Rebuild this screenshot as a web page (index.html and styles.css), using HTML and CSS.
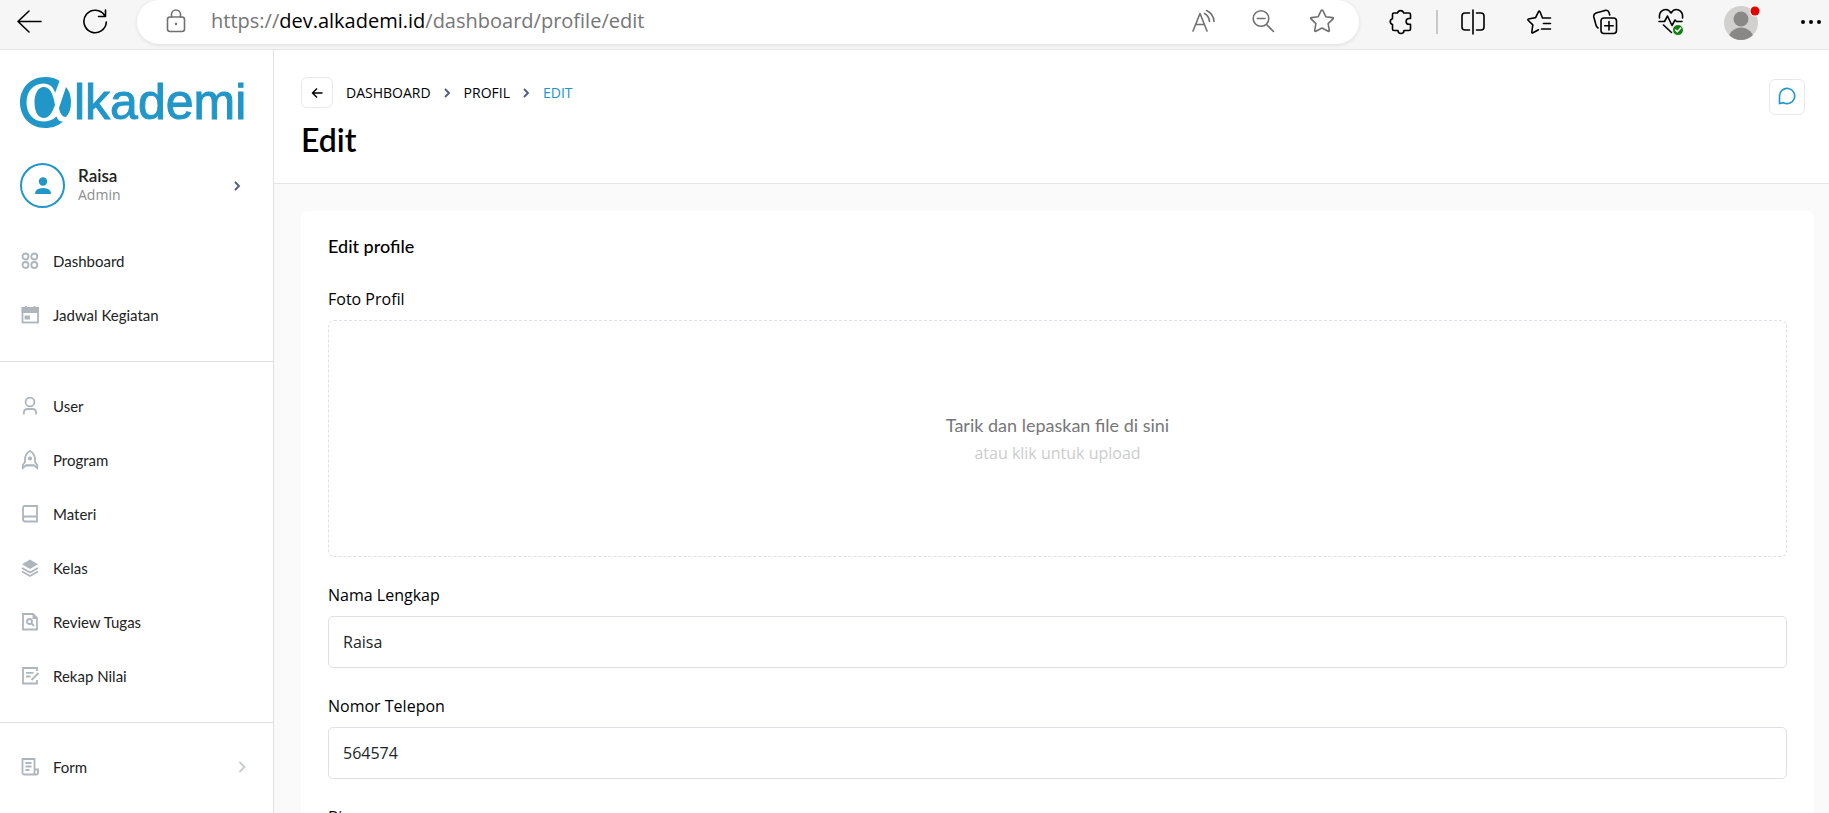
FILE: index.html
```html
<!DOCTYPE html>
<html lang="id">
<head>
<meta charset="utf-8">
<title>Edit Profil - Alkademi</title>
<link rel="stylesheet" href="styles.css">
</head>
<body>
<header class="browser">
  <div class="browser-nav">
    <button class="tool" aria-label="Back"><svg width="26" height="26" viewBox="0 0 26 26"><path d="M25 12.500H2M13 2 2 12.500 13 23"/></svg></button>
    <button class="tool" aria-label="Reload"><svg width="26" height="26" viewBox="0 0 26 26"><path d="M22.600 6.500A11.200 11.200 0 1 0 24.300 13M23.500 1v6.500H16.500"/></svg></button>
  </div>
  <div class="address">
    <svg class="grey" width="20" height="24" viewBox="0 0 20 24"><rect x="1.500" y="8" width="17" height="14.500" rx="2.500"/><path d="M5.500 8V5.500a4.500 4.500 0 0 1 9 0V8"/><circle cx="10" cy="15" r="1.200" class="solid"/></svg>
    <p class="url">https://<span class="host">dev.alkademi.id</span>/dashboard/profile/edit</p>
    <div class="address-tools">
      <button class="tool grey" aria-label="Read aloud"><svg width="26" height="24" viewBox="0 0 26 24"><path d="M2 22 9 4.500 16 22M4.800 15.500h8.500M13.500 4.500q4.500 2.500 5 8M15.500 1.500q7 3 7.500 11"/></svg></button>
      <button class="tool grey" aria-label="Zoom"><svg width="24" height="24" viewBox="0 0 24 24"><circle cx="10" cy="9.500" r="7.800"/><path d="M6.500 9.500h7.500M15.500 15.500 22.500 22.500"/></svg></button>
      <button class="tool grey" aria-label="Add to favorites"><svg width="26" height="26" viewBox="0 0 26 26"><path d="M13 2q.6 0 .9.700l2.900 6 6.700.9q1.300.3.500 1.300l-4.900 4.700 1.200 6.700q.1 1.400-1.100.9L13 20l-6.100 3.200q-1.300.5-1.200-.9l1.200-6.700L2 10.900q-.8-1 .5-1.300l6.700-.9 2.900-6q.3-.7.900-.7z"/></svg></button>
    </div>
  </div>
  <div class="browser-tools">
    <button class="tool" aria-label="Extensions"><svg width="26" height="26" viewBox="0 0 26 26"><path d="M9.500 4a3.200 3.200 0 0 1 6.200 0H21a1.500 1.500 0 0 1 1.500 1.500V9.500h-1.500a2.800 2.800 0 0 0 0 5.800h1.500V20a1.500 1.500 0 0 1-1.500 1.500h-5a3 3 0 0 1-6 0H6A1.500 1.500 0 0 1 4.500 20v-4.500a3 3 0 0 1 0-5.800V5.500A1.500 1.500 0 0 1 6 4z"/></svg></button>
    <span class="tool-rule"></span>
    <button class="tool" aria-label="Split screen"><svg width="26" height="26" viewBox="0 0 26 26"><path d="M13 1v24M9.500 4H5a3 3 0 0 0-3 3v11a3 3 0 0 0 3 3h4.500M16.500 4H21a3 3 0 0 1 3 3v11a3 3 0 0 1-3 3h-4.500"/></svg></button>
    <button class="tool" aria-label="Favorites"><svg width="26" height="26" viewBox="0 0 26 26"><path d="M24.500 9h-8L14 2.800q-.8-1.300-1.600 0L9.600 8.600 2.500 10q-1 .4-.4 1.300l4.700 4.600L5.800 23q0 1.300 1.200.8l5.500-3M17.500 14.500h7M15.500 20h9"/></svg></button>
    <button class="tool" aria-label="Collections"><svg width="26" height="26" viewBox="0 0 26 26"><rect x="9" y="9" width="15.500" height="15.500" rx="3"/><path d="M17 12.500v8.500M12.700 16.800h8.500M6 19Q4.500 18 4 16L1.800 8Q1.200 5 4 4l9-2.600q3.200-.7 4 2L17.700 6"/></svg></button>
    <button class="tool" aria-label="Browser essentials"><svg width="26" height="28" viewBox="0 0 26 28"><path d="M1.500 10C.5 2 9-1.500 13 5c4-6.500 12.500-3 11.500 5M1 13.500h5.500L9.500 8l4.500 9.500 3-5.500 1.500 1.500H24M5.500 17l8 7.500"/><circle cx="20" cy="22" r="5.500" class="check-disc"/><path d="m17.500 22 1.800 1.800L22.800 20" class="check-mark"/></svg></button>
    <button class="tool" aria-label="Profile"><svg width="36" height="36" viewBox="0 0 36 36"><defs><clipPath id="face"><circle cx="17" cy="19" r="17"/></clipPath></defs><g clip-path="url(#face)" stroke="none"><rect width="36" height="38" fill="#d2d0ce"/><circle cx="17" cy="15" r="7.500" fill="#8a8886"/><circle cx="17" cy="36.500" r="13" fill="#8a8886"/></g><circle cx="31" cy="7" r="5.500" fill="#f6f6f6" stroke="none"/><circle cx="31" cy="7" r="4.500" fill="#e60000" stroke="none"/></svg></button>
    <button class="tool" aria-label="More"><svg width="22" height="6" viewBox="0 0 22 6"><g fill="#000" stroke="none"><circle cx="3" cy="3" r="2"/><circle cx="11" cy="3" r="2"/><circle cx="19" cy="3" r="2"/></g></svg></button>
  </div>
</header>

<div class="app">
  <aside class="sidebar">
    <a class="logo" href="#"><svg width="52" height="51" viewBox="0 0 52 51"><path fill="#2196c8" d="M39.500 4C36 1.500 31 0 25 0 10.500 0 0 11 0 25.500S10.500 51 25 51c7 0 13-2 18-6.500-3 .5-5-1-6.500-5-3.500 3.500-8 5-13.500 5C13 44.500 6.500 36 6.500 25.500S13 6.500 23.500 6.500c6 0 10 3.500 11.500 9.500z"/><path fill="#2196c8" d="M24 10c-6 0-9.500 6.500-9.500 15.500S18 41 24 41c5 0 8-5 11-13l-1-5C32 15 29 10 24 10zM46 10c3.500 4 5 9 5 15.500 0 6-1.500 11-5 14.500-3.500 0-6-3-7-9z"/></svg><span>lkademi</span></a>
    <a class="account" href="#">
      <span class="avatar"><svg width="16" height="18" viewBox="0 0 16 18"><circle cx="8" cy="4.500" r="4.200"/><path d="M0 17q0-6 8-6t8 6z"/></svg></span>
      <span class="who"><strong>Raisa</strong><small>Admin</small></span>
      <svg class="chevron" width="7" height="10" viewBox="0 0 7 10"><path d="m1 1 4 4-4 4"/></svg>
    </a>
    <nav>
      <ul class="menu">
        <li><a href="#"><svg viewBox="0 0 20 20"><circle cx="5.500" cy="5.500" r="3"/><circle cx="14.300" cy="5.500" r="3"/><circle cx="5.500" cy="14" r="3"/><circle cx="14.300" cy="14" r="3"/></svg>Dashboard</a></li>
        <li><a href="#"><svg viewBox="0 0 20 20"><rect x="2.500" y="3.500" width="15.500" height="14"/><path d="M2.500 3h15.500v4H2.500z" class="fill"/><path d="M6 1v2M14.500 1v2"/><path d="M5.500 11.500h3.500v2H5.500z" class="fill"/></svg>Jadwal Kegiatan</a></li>
      </ul>
      <ul class="menu">
        <li><a href="#"><svg viewBox="0 0 20 20"><circle cx="10" cy="6" r="4.400"/><path d="M3.800 18.500V17q0-4 4-4h4.400q4 0 4 4v1.500"/></svg>User</a></li>
        <li><a href="#"><svg viewBox="0 0 20 20"><path d="M6 15.200h8M5 12V8q1-5 5-7 4 2 5 7v4l2.200 3v3l-3-2.500H5.800L2.800 18v-3z"/><circle cx="10" cy="8.500" r="1.200" class="fill"/></svg>Program</a></li>
        <li><a href="#"><svg viewBox="0 0 20 20"><path d="M3 15V4q0-2 2-2h12v15.500H5q-2 0-2-2.500t2-2.500h12"/></svg>Materi</a></li>
        <li><a href="#"><svg viewBox="0 0 20 20"><path d="m10 1.500 8 4.700-8 4.800-8-4.800z" class="fill flat"/><path d="m2 10 8 4.500 8-4.500M2 13.500l8 4.500 8-4.500"/></svg>Kelas</a></li>
        <li><a href="#"><svg viewBox="0 0 20 20"><path d="M13 2H3v15.500h14V6z"/><path d="M12.500 1.500 17.500 7h-5z" class="fill flat"/><circle cx="9.500" cy="9.500" r="2.500"/><path d="m11.500 11.500 2.500 2.500"/></svg>Review Tugas</a></li>
        <li><a href="#"><svg viewBox="0 0 20 20"><path d="M17 5V2H3v15.500h14V14M6 6.800h7.500M6 10.500h4.500M11.500 14l7-7"/></svg>Rekap Nilai</a></li>
      </ul>
      <ul class="menu">
        <li><a href="#"><svg viewBox="0 0 20 20"><path d="M14.500 12.500V2H2.500v14q0 1.500 1.500 1.500h12q2 0 2-1.500v-3.500h-3.500v3.500q0 1.500 1.500 1.500M5.500 6h6M5.500 9.500h6M5.500 13h4"/></svg>Form<svg class="more" viewBox="0 0 8 12"><path d="m1.500 1 5 5-5 5"/></svg></a></li>
      </ul>
    </nav>
  </aside>

  <main class="main">
    <div class="page-head">
      <div class="head-left">
        <nav class="crumbs" aria-label="Breadcrumb">
          <button class="back" aria-label="Kembali"><svg width="12" height="12" viewBox="0 0 12 12"><path d="M11.500 6H1.500M6 1.500 1.500 6 6 10.500"/></svg></button>
          <a href="#">DASHBOARD</a>
          <svg class="chevron" width="7" height="10" viewBox="0 0 7 10"><path d="m1 1 4 4-4 4"/></svg>
          <a href="#">PROFIL</a>
          <svg class="chevron" width="7" height="10" viewBox="0 0 7 10"><path d="m1 1 4 4-4 4"/></svg>
          <span class="current">EDIT</span>
        </nav>
        <h1>Edit</h1>
      </div>
      <button class="chat" aria-label="Pesan"><svg width="18" height="18" viewBox="0 0 18 18"><path d="M1.500 16.500V9a7.600 7.600 0 1 1 4 6.700z"/></svg></button>
    </div>
    <form class="card">
      <h2>Edit profile</h2>
      <div class="field">
        <label for="photo">Foto Profil</label>
        <button type="button" id="photo" class="drop"><span class="drop-title">Tarik dan lepaskan file di sini</span><span class="drop-hint">atau klik untuk upload</span></button>
      </div>
      <div class="field">
        <label for="name">Nama Lengkap</label>
        <input id="name" type="text" value="Raisa">
      </div>
      <div class="field">
        <label for="phone">Nomor Telepon</label>
        <input id="phone" type="text" value="564574">
      </div>
      <div class="field">
        <label for="bio">Bio</label>
        <textarea id="bio" rows="4"></textarea>
      </div>
    </form>
  </main>
</div>
</body>
</html>
```
FILE: styles.css
```css
* { box-sizing: border-box; }

body {
  margin: 0;
  height: 100vh;
  display: flex;
  flex-direction: column;
  overflow: hidden;
  background: #fff;
  color: #000;
  font-family: "Open Sans", "Noto Sans", sans-serif;
  font-size: 16px;
}

a { color: inherit; text-decoration: none; }
button { padding: 0; border: 0; background: none; font: inherit; color: inherit; }
svg { display: block; flex: none; fill: none; }

/* Browser toolbar */
.browser {
  flex: none;
  display: flex;
  height: 50px;
  padding-right: 7px;
  background: #f6f6f6;
  border-bottom: 1px solid #e5e5e5;
}
.browser svg { stroke: #000; stroke-width: 1.6; stroke-linejoin: round; stroke-linecap: round; }
.browser .grey svg, .browser svg.grey { stroke: #707070; }
.browser svg .solid { fill: #707070; stroke: none; }
.browser .check-disc { fill: #107c10; stroke: #f6f6f6; stroke-width: 1; }
.browser .check-mark { stroke: #fff; }
.tool { display: flex; align-items: center; justify-content: center; }
.browser-nav {
  display: flex;
  align-items: center;
  gap: 40px;
  height: 44px;
  padding: 0 29px 0 16px;
}
.address {
  flex: 1;
  display: flex;
  align-items: center;
  height: 44px;
  padding: 0 24px 2px 29px;
  background: #fff;
  border-radius: 22px;
  box-shadow: 0 1px 4px rgba(0, 0, 0, 0.1);
}
.url { flex: 1; margin: 0 0 0 25px; font-size: 20px; line-height: 28px; color: #767676; }
.host { color: #000; }
.address-tools { display: flex; gap: 34px; }
.browser-tools { display: flex; align-items: center; gap: 40px; height: 44px; padding-left: 29px; }
.tool-rule { width: 2px; height: 24px; margin: 0 -18px; background: #c8c8c8; }

/* Application shell */
.app { flex: 1; display: flex; min-height: 0; }
.sidebar { flex: none; width: 274px; border-right: 1px solid #e2e2e2; background: #fff; }
.logo {
  display: flex;
  align-items: center;
  gap: 2px;
  padding: 27px 0 0 20px;
  color: #2196c8;
  font-family: "Liberation Sans", Arial, sans-serif;
  font-size: 50px;
  line-height: 51px;
  -webkit-text-stroke: 1px #2196c8;
}
.account { display: flex; align-items: center; gap: 13px; padding: 35px 32px 27px 20px; }
.avatar {
  display: flex;
  align-items: center;
  justify-content: center;
  width: 45px;
  height: 45px;
  border: 2px solid #2196c8;
  border-radius: 50%;
}
.avatar svg { fill: #2196c8; }
.who { flex: 1; display: flex; flex-direction: column; padding-bottom: 2px; }
.who strong { font: 600 17px/20px Lato, sans-serif; color: #222; }
.who small { font-size: 14px; line-height: 18px; color: #8c8c8c; }
.chevron { stroke: #4d5b7c; stroke-width: 1.8; }

.menu { margin: 0; padding: 0 0 18px; list-style: none; }
.menu + .menu { padding-top: 18px; border-top: 1px solid #e2e2e2; }
.menu a {
  display: flex;
  align-items: center;
  gap: 13px;
  height: 54px;
  padding: 0 27px 2px 20px;
  font: 400 15px/20px Lato, sans-serif;
  color: #222;
}
.menu svg { width: 20px; height: 20px; stroke: #adb5bd; stroke-width: 1.8; }
.menu svg .fill { fill: #adb5bd; }
.menu svg .flat { stroke: none; }
.menu svg.more { width: 8px; height: 12px; margin-left: auto; stroke: #c5cad0; }

/* Page header */
.main { flex: 1; min-width: 0; background: #fafafa; }
.page-head {
  display: flex;
  justify-content: space-between;
  align-items: flex-start;
  height: 134px;
  padding: 27px 24px 0 27px;
  background: #fff;
  border-bottom: 1px solid #e5e5e5;
}
.crumbs { display: flex; align-items: center; gap: 13px; font-size: 14px; line-height: 20px; }
.back {
  display: flex;
  align-items: center;
  justify-content: center;
  width: 32px;
  height: 31px;
  border: 1px solid #e8e8ea;
  border-radius: 6px;
}
.back svg { stroke: #000; stroke-width: 1.4; }
.current { color: #2196c8; }
h1 { margin: 12px 0 0; font: 600 32px/40px Lato, sans-serif; }
.chat {
  display: flex;
  align-items: center;
  justify-content: center;
  width: 36px;
  height: 36px;
  margin-top: 2px;
  padding-bottom: 2px;
  border: 1px solid #e8e8ea;
  border-radius: 6px;
}
.chat svg { stroke: #2196c8; stroke-width: 1.6; }

/* Form */
.card { margin: 27px 15px 0 27px; padding: 24px 27px; background: #fff; border-radius: 6px; }
h2 { margin: 0 0 30px; font: 500 18px/22px Lato, sans-serif; }
.field { margin-bottom: 26px; }
.field label { display: block; margin-bottom: 9px; line-height: 24px; }
.field input, .field textarea {
  display: block;
  width: 100%;
  height: 52px;
  padding: 0 14px;
  border: 1px solid #dee0e5;
  border-radius: 5px;
  background: #fff;
  font: inherit;
  color: #212529;
  outline: none;
}
.field textarea { height: 120px; }
.drop {
  display: flex;
  flex-direction: column;
  align-items: center;
  justify-content: center;
  gap: 4px;
  width: 100%;
  height: 237px;
  border: 1px dashed #dee0e5;
  border-radius: 6px;
}
.drop-title { font: 400 18px/24px Lato, sans-serif; color: #777; }
.drop-hint { line-height: 24px; color: #ccc; }
```
